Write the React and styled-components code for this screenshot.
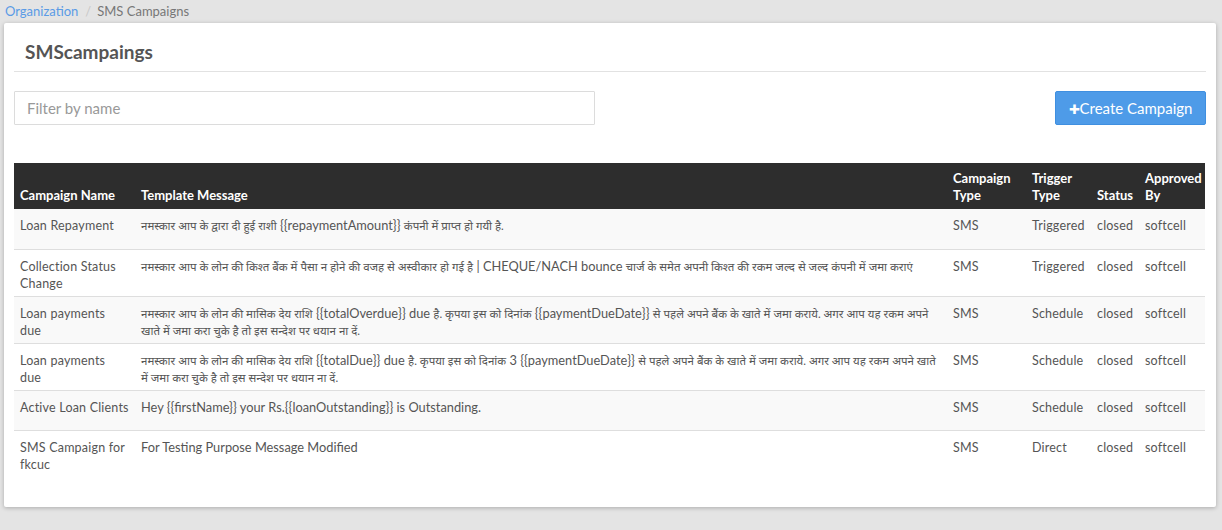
import styled, { createGlobalStyle } from 'styled-components';

const GlobalStyle = createGlobalStyle`
  html, body {
    margin: 0;
    padding: 0;
    background: #e4e4e4;
    font-family: Lato, "Noto Sans", "Open Sans", sans-serif;
    color: #555;
  }
  * { box-sizing: border-box; }
`;

const rows = [
  {
    name: 'Loan Repayment',
    message: 'नमस्कार आप के द्वारा दी हुई राशी {{repaymentAmount}} कंपनी में प्राप्त हो गयी है.',
    type: 'SMS', trigger: 'Triggered', status: 'closed', by: 'softcell',
  },
  {
    name: 'Collection Status Change',
    message: 'नमस्कार आप के लोन की किश्त बैंक में पैसा न होने की वजह से अस्वीकार हो गई है | CHEQUE/NACH bounce चार्ज के समेत अपनी किश्त की रकम जल्द से जल्द कंपनी में जमा कराएं',
    type: 'SMS', trigger: 'Triggered', status: 'closed', by: 'softcell',
  },
  {
    name: 'Loan payments due',
    message: 'नमस्कार आप के लोन की मासिक देय राशि {{totalOverdue}} due है. कृपया इस को दिनांक {{paymentDueDate}} से पहले अपने बैंक के खाते में जमा कराये. अगर आप यह रकम अपने खाते में जमा करा चुके है तो इस सन्देश पर धयान ना दें.',
    type: 'SMS', trigger: 'Schedule', status: 'closed', by: 'softcell',
  },
  {
    name: 'Loan payments due',
    message: 'नमस्कार आप के लोन की मासिक देय राशि {{totalDue}} due है. कृपया इस को दिनांक 3 {{paymentDueDate}} से पहले अपने बैंक के खाते में जमा कराये. अगर आप यह रकम अपने खाते में जमा करा चुके है तो इस सन्देश पर धयान ना दें.',
    type: 'SMS', trigger: 'Schedule', status: 'closed', by: 'softcell',
  },
  {
    name: 'Active Loan Clients',
    message: 'Hey {{firstName}} your Rs.{{loanOutstanding}} is Outstanding.',
    type: 'SMS', trigger: 'Schedule', status: 'closed', by: 'softcell',
  },
  {
    name: 'SMS Campaign for fkcuc',
    message: 'For Testing Purpose Message Modified',
    type: 'SMS', trigger: 'Direct', status: 'closed', by: 'softcell',
  },
];

const columns = [
  { label: 'Campaign Name', width: 121 },
  { label: 'Template Message', width: 812 },
  { label: 'Campaign Type', width: 79 },
  { label: 'Trigger Type', width: 65 },
  { label: 'Status', width: 48 },
  { label: 'Approved By', width: 66 },
];

// hindi runs get their own span so both scripts can be sized to match
const devanagari = /([\u0900-\u097F][\u0900-\u097F\s|.]*[\u0900-\u097F.]|[\u0900-\u097F])/;

let Message = ({ text }) => (
  <>
    {text.split(devanagari).filter(Boolean).map((part, i) =>
      devanagari.test(part) ? (
        <Hindi key={i}>{part}</Hindi>
      ) : (
        <Latin key={i}>{part}</Latin>
      )
    )}
  </>
);

let App = () => {
  return (
    <Page>
      <GlobalStyle />
      <Breadcrumb>
        <a>Organization</a>
        <span className='sep'>/</span>
        <span>SMS Campaigns</span>
      </Breadcrumb>
      <Card>
        <CardTitle>SMScampaings</CardTitle>
        <Toolbar>
          <FilterInput placeholder='Filter by name' />
          <CreateButton>
            <span className='plus'>✚</span>Create Campaign
          </CreateButton>
        </Toolbar>
        <Table>
          <colgroup>
            {columns.map((c) => (
              <col key={c.label} style={{ width: c.width }} />
            ))}
          </colgroup>
          <thead>
            <tr>
              {columns.map((c) => (
                <th key={c.label}>{c.label}</th>
              ))}
            </tr>
          </thead>
          <tbody>
            {rows.map((r, i) => (
              <Row key={i} $striped={i % 2 === 0}>
                <td>{r.name}</td>
                <td><Message text={r.message} /></td>
                <td>{r.type}</td>
                <td>{r.trigger}</td>
                <td>{r.status}</td>
                <td>{r.by}</td>
              </Row>
            ))}
          </tbody>
        </Table>
      </Card>
    </Page>
  );
};

let Page = styled.div`
  width: 1222px;
  height: 530px;
  padding: 0 6px 0 4px;
  overflow: hidden;
`;

let Breadcrumb = styled.div`
  height: 23px;
  padding: 3px 0 0 1px;
  font-size: 13px;
  color: #777;

  a {
    color: #5a9be6;
  }
  .sep {
    color: #c8c8c8;
    margin: 0 6px 0 7px;
  }
`;

let Card = styled.div`
  background: #fff;
  height: 484px;
  padding: 0 10px;
  border-radius: 2px;
  overflow: hidden;
  box-shadow: 0 1px 4px rgba(0, 0, 0, 0.25);
`;

let CardTitle = styled.h2`
  margin: 0;
  height: 49px;
  padding: 17px 0 0 11px;
  font-size: 19px;
  font-weight: 700;
  color: #555;
  border-bottom: 1px solid #e2e2e2;
`;

let Toolbar = styled.div`
  display: flex;
  justify-content: space-between;
  align-items: flex-start;
  padding: 19px 0 0 0;
  height: 91px;
`;

let FilterInput = styled.input`
  width: 581px;
  height: 34px;
  border: 1px solid #dcdcdc;
  border-radius: 1px;
  padding: 0 12px;
  font-family: inherit;
  font-size: 15px;
  color: #555;
  outline: none;

  &::placeholder {
    color: #999;
  }
`;

let CreateButton = styled.button`
  width: 151px;
  height: 34px;
  background: #4e9be8;
  border: 1px solid #3f8fe0;
  border-radius: 2px;
  color: #fff;
  font-family: inherit;
  font-size: 15px;
  padding: 0;

  .plus {
    font-size: 13px;
  }
`;

let Table = styled.table`
  width: 1191px;
  table-layout: fixed;
  border-collapse: collapse;
  font-size: 12.5px;
  letter-spacing: 0.2px;
  color: #555;

  th {
    background: #2d2d2d;
    color: #fff;
    font-weight: 700;
    font-size: 13px;
    letter-spacing: 0;
    text-align: left;
    vertical-align: bottom;
    height: 46px;
    padding: 6px 6px 5px 6px;
    line-height: 17px;
  }
  td {
    vertical-align: top;
    height: 40px;
    padding: 8px 6px 4px 6px;
    line-height: 17px;
    border-top: 1px solid #dedede;
  }
  tbody tr:first-child td {
    border-top: none;
  }
`;

let Latin = styled.span`
  font-size: 12.8px;
  letter-spacing: 0;
  line-height: 17px;
`;

let Hindi = styled.span`
  font-size: 11.5px;
  letter-spacing: 0;
  line-height: 17px;
`;

let Row = styled.tr`
  background: ${(p) => (p.$striped ? '#f9f9f9' : '#fff')};
`;

export default App;
